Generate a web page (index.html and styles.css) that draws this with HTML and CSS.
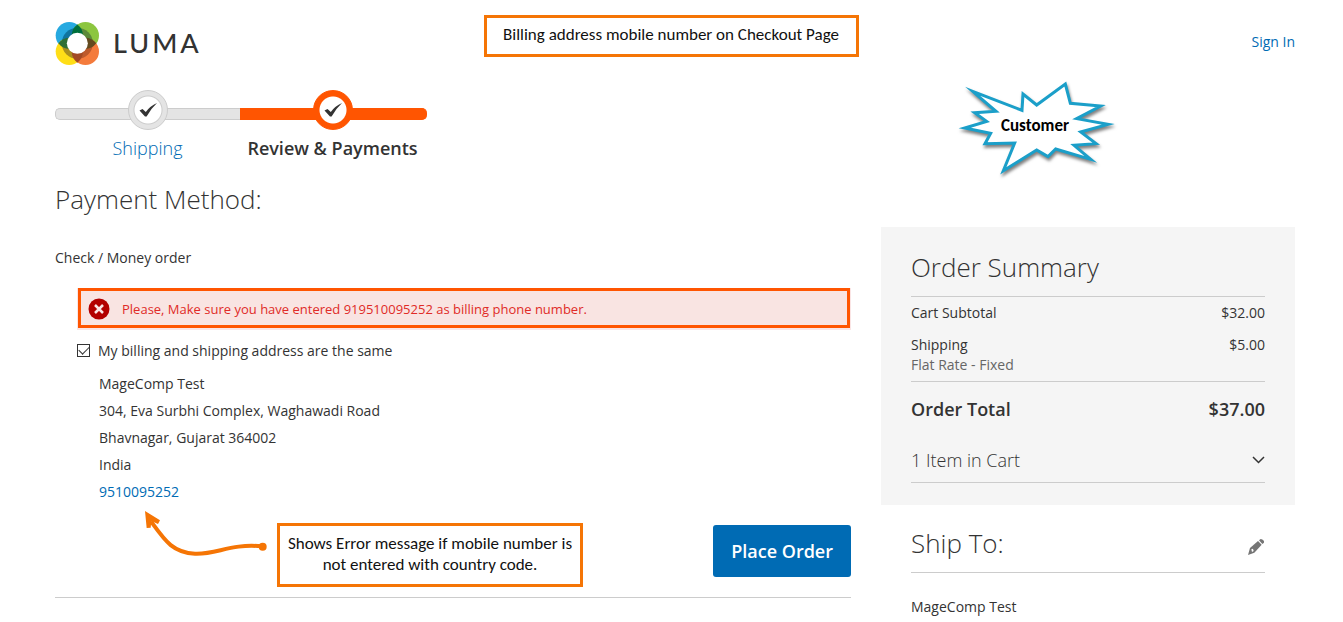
FILE: index.html
```html
<!DOCTYPE html>
<html lang="en">
<head>
  <meta charset="UTF-8" />
  <meta name="viewport" content="width=device-width, initial-scale=1" />
  <title>Checkout</title>
  <link rel="stylesheet" href="styles.css">
</head>
<body>
  <div class="page">
    <header class="header">
      <a href="#" class="logo" aria-label="Luma">
        <svg viewBox="46 34 130 130" width="44" height="44" aria-hidden="true">
          <circle cx="88" cy="77" r="40" fill="#26a9e0" />
          <circle cx="136" cy="77" r="40" fill="#8cc63f" />
          <circle cx="88" cy="124" r="40" fill="#ffde17" />
          <circle cx="136" cy="124" r="40" fill="#f47b3c" />
          <path d="M112 54A46 46 0 0 0 66 100L112 100Z" fill="#0f749f" />
          <path d="M112 54A46 46 0 0 1 158 100L112 100Z" fill="#5c8a3a" />
          <path d="M66 100A46 46 0 0 0 112 146L112 100Z" fill="#a98f1f" />
          <path d="M158 100A46 46 0 0 1 112 146L112 100Z" fill="#bd5a2c" />
          <path d="M112 44A41 41 0 0 1 112 110A41 41 0 0 1 112 44Z" fill="#006f3c" />
          <path d="M112 91A41 41 0 0 1 112 157A41 41 0 0 1 112 91Z" fill="#a34a24" />
          <path d="M56 100A41 41 0 0 1 122 100A41 41 0 0 1 56 100Z" fill="#2f6f35" />
          <path d="M102 100A41 41 0 0 1 168 100A41 41 0 0 1 102 100Z" fill="#634a1e" />
          <circle cx="112" cy="100" r="31" fill="#fff" />
        </svg>
        <span class="logo-text">LUMA</span>
      </a>
      <a href="#" class="sign-in">Sign In</a>
    </header>

    <p class="note note-title">Billing address mobile number on Checkout Page</p>

    <div class="burst">
      <svg viewBox="0 0 570 345" aria-hidden="true">
        <polygon points="98,64 246,121 249,72 290,105 376,42 391,100 482,108 410,146 504,163 422,186 468,221 402,226 452,268 347,237 324,260 290,240 190,302 224,219 135,221 152,190 74,174 140,154 104,128 168,124" />
      </svg>
      <span>Customer</span>
    </div>

    <!-- Checkout steps -->
    <ol class="steps">
      <li class="step">
        <div class="track"><span class="marker">
          <svg viewBox="0 0 20 16" width="20" height="16" aria-hidden="true"><path d="M1.500 8.500L4.500 7L7.800 10Q12 4 19 1Q13 6.500 8.600 14.500L7 14.500Z" /></svg>
        </span></div>
        <a href="#">Shipping</a>
      </li>
      <li class="step active">
        <div class="track"><span class="marker">
          <svg viewBox="0 0 20 16" width="20" height="16" aria-hidden="true"><path d="M1.500 8.500L4.500 7L7.800 10Q12 4 19 1Q13 6.500 8.600 14.500L7 14.500Z" /></svg>
        </span></div>
        <span>Review &amp; Payments</span>
      </li>
    </ol>

    <div class="columns">
      <main class="payment">
        <h1>Payment Method:</h1>
        <h2>Check / Money order</h2>

        <div class="payment-content">
          <div class="error">
            <div class="error-inner" role="alert">
              <svg viewBox="0 0 22 22" width="22" height="22" aria-hidden="true">
                <circle cx="11" cy="11" r="10.500" fill="#b30000" />
                <path d="M7 7L15 15M15 7L7 15" stroke="#fae5e5" stroke-width="2.500" />
              </svg>
              <span>Please, Make sure you have entered 919510095252 as billing phone number.</span>
            </div>
          </div>

          <div class="same-address">
            <input type="checkbox" id="same" checked />
            <label for="same">My billing and shipping address are the same</label>
          </div>

          <address>
            MageComp Test<br />
            304, Eva Surbhi Complex, Waghawadi Road<br />
            Bhavnagar, Gujarat 364002<br />
            India<br />
            <a href="tel:9510095252">9510095252</a>
          </address>

          <div class="actions">
            <svg class="arrow" viewBox="0 0 390 150" width="130" height="50" aria-hidden="true">
              <path d="M33 34C75 92 98 128 165 131C230 134 270 100 367 109" fill="none" stroke="#f57505" stroke-width="12" />
              <path d="M15 3L60 31L54 42L34 33L32 53L20 54Z" fill="#f57505" />
              <circle cx="368" cy="110" r="12" fill="#f57505" />
            </svg>
            <p class="note note-error">Shows Error message if mobile number is<br />not entered with country code.</p>
            <button type="button">Place Order</button>
          </div>
        </div>
      </main>

      <aside class="sidebar">
        <section class="summary">
          <h2 class="block-title">Order Summary</h2>
          <table>
            <tbody>
              <tr>
                <th scope="row">Cart Subtotal</th>
                <td>$32.00</td>
              </tr>
              <tr>
                <th scope="row">Shipping<span class="method">Flat Rate - Fixed</span></th>
                <td>$5.00</td>
              </tr>
            </tbody>
            <tfoot>
              <tr>
                <th scope="row">Order Total</th>
                <td>$37.00</td>
              </tr>
            </tfoot>
          </table>
          <button type="button" class="cart-toggle" aria-expanded="false">
            <span>1 Item in Cart</span>
            <svg viewBox="0 0 14 10" width="14" height="10" aria-hidden="true"><path d="M2 2L7.500 7.500L13 2" /></svg>
          </button>
        </section>

        <section class="ship-to">
          <div class="block-title">
            <h2>Ship To:</h2>
            <button type="button" class="edit" aria-label="Edit">
              <svg viewBox="0 0 48 48" width="16" height="16" aria-hidden="true">
                <path d="M0 48L6 27L30 6L41 17L19 41Z" fill="#757575" />
                <path d="M33 4L38 0Q43 0 48 6Q49 10 47 12L43 15Z" fill="#757575" />
                <path d="M10 31L15 29L17 36L12 39Z" fill="#fff" />
              </svg>
            </button>
          </div>
          <p>MageComp Test</p>
        </section>
      </aside>
    </div>
  </div>
</body>
</html>
```
FILE: styles.css
```css
* {
  box-sizing: border-box;
}

body {
  margin: 0;
  font-family: 'Open Sans', 'Noto Sans', sans-serif;
  font-size: 14px;
  line-height: 20px;
  color: #333;
  background-color: #fff;
}

h1, h2, p, ol {
  margin: 0;
  padding: 0;
}

a {
  color: #006bb4;
  text-decoration: none;
}

button {
  border: none;
  background: none;
  padding: 0;
  font-family: inherit;
  color: inherit;
  cursor: pointer;
}

svg {
  display: block;
}

.page {
  position: relative;
  padding: 0 48px 0 55px;
}

.header {
  display: flex;
  align-items: center;
  justify-content: space-between;
  height: 90px;
  padding-bottom: 6px;
}

.logo {
  display: flex;
  align-items: center;
  gap: 14px;
  padding-top: 2px;
  color: #333;
}

.logo-text {
  font-family: Lato, sans-serif;
  font-size: 27px;
  font-weight: 500;
  letter-spacing: 3px;
}

/* Orange notes laid over the page */
.note {
  position: absolute;
  border: 3px solid #f57505;
  background-color: #fff;
  color: #111;
  font-family: Carlito, Lato, sans-serif;
  font-size: 17px;
  line-height: 21px;
  text-align: center;
  white-space: nowrap;
}

.note-title {
  top: 15px;
  left: 50%;
  width: 375px;
  margin-left: -188px;
  padding: 6px 0 9px;
}

.burst {
  position: absolute;
  top: 70px;
  right: 213px;
  width: 190px;
}

.burst polygon {
  fill: #fff;
  stroke: #1b9fc9;
  stroke-width: 9;
  stroke-miterlimit: 10;
  filter: drop-shadow(3px 8px 5px rgba(0, 0, 0, 0.5));
}

.burst span {
  position: absolute;
  top: 46px;
  left: 0;
  width: 100%;
  text-align: center;
  font-family: Carlito, Lato, sans-serif;
  font-size: 17px;
  font-weight: 700;
  color: #000;
}

/* Steps */
.steps {
  display: flex;
  list-style: none;
}

.step {
  width: 185px;
  font-size: 18px;
  font-weight: 300;
  text-align: center;
}

.track {
  display: flex;
  align-items: center;
  justify-content: center;
  height: 40px;
  margin-bottom: 8px;
  position: relative;
}

.track::before {
  content: "";
  position: absolute;
  top: 18px;
  left: 0;
  right: 0;
  height: 10px;
  background-color: #e4e4e4;
  border: 1px solid #ccc;
  border-right: none;
  border-radius: 5px 0 0 5px;
}

.marker {
  position: relative;
  display: flex;
  align-items: center;
  justify-content: center;
  width: 40px;
  height: 40px;
  border-radius: 50%;
  background: radial-gradient(circle, #fff 13px, #ccc 14px, #e4e4e4 15px);
  border: 1px solid #ccc;
}

.marker path {
  fill: #333;
}

.step.active {
  font-weight: 600;
}

.step.active .track::before {
  right: -2px;
  background-color: #ff5501;
  border-color: #ff5501;
  border-radius: 0 5px 5px 0;
}

.step.active .marker {
  background: radial-gradient(circle, #fff 13px, #ff5501 14px);
  border-color: #ff5501;
}

/* Content */
.columns {
  display: grid;
  grid-template-columns: 1fr 414px;
  gap: 30px;
  align-items: start;
}

.payment {
  padding: 23px 0 20px;
  border-bottom: 1px solid #ccc;
}

.payment h1 {
  font-size: 26px;
  font-weight: 300;
  line-height: 36px;
}

.payment h2 {
  margin: 31px 0 20px;
  font-size: 14px;
  font-weight: 400;
}

.payment-content {
  padding-left: 22px;
}

.error {
  padding: 0 1px 2px;
  background-color: #fae5e5;
}

.error-inner {
  display: flex;
  align-items: center;
  gap: 12px;
  min-height: 40px;
  padding: 2px 7px 0;
  border: 3px solid #ff5501;
  background-color: #f9e4e2;
  color: #e02b27;
  font-size: 13px;
}

.same-address {
  display: flex;
  align-items: center;
  gap: 8px;
  margin-top: 11px;
}

.same-address input {
  appearance: none;
  width: 13px;
  height: 13px;
  margin: 0 0 2px;
  border: 1px solid #333;
  background-color: #fff;
  position: relative;
}

.same-address input:checked::after {
  content: "";
  position: absolute;
  top: 1px;
  left: 1px;
  width: 9px;
  height: 5px;
  border-left: 1px solid #333;
  border-bottom: 1px solid #333;
  transform: rotate(-45deg);
}

address {
  margin-top: 9px;
  padding-left: 22px;
  font-style: normal;
  line-height: 27px;
}

.actions {
  position: relative;
  display: flex;
  justify-content: flex-end;
  margin-top: 20px;
}

.actions button {
  height: 52px;
  padding: 0 18px;
  border-radius: 3px;
  background-color: #006bb4;
  color: #fff;
  font-size: 18px;
  font-weight: 600;
}

.actions button:hover {
  background-color: #005b99;
}

.note-error {
  top: -2px;
  left: 200px;
  width: 306px;
  padding: 7px 0 9px;
}

.arrow {
  position: absolute;
  top: -15px;
  left: 63px;
}

/* Sidebar */
.sidebar {
  padding-top: 69px;
}

.summary {
  padding: 22px 30px;
  background-color: #f5f5f5;
}

.block-title {
  display: flex;
  align-items: center;
  justify-content: space-between;
  padding-bottom: 11px;
  border-bottom: 1px solid #ccc;
}

.block-title,
.block-title h2 {
  font-size: 26px;
  font-weight: 300;
  line-height: 36px;
}

.edit {
  padding: 8px 1px 0 0;
}

table {
  width: 100%;
  border-collapse: separate;
  border-spacing: 0;
}

th, td {
  padding: 6px 0;
  font-weight: 400;
  text-align: left;
  vertical-align: top;
}

td {
  text-align: right;
}

.method {
  display: block;
  color: #666;
}

tfoot th, tfoot td {
  padding: 17px 0;
  border-top: 1px solid #ccc;
  font-size: 18px;
  font-weight: 600;
}

.cart-toggle {
  display: flex;
  align-items: center;
  justify-content: space-between;
  width: 100%;
  padding: 14px 0 12px;
  border-bottom: 1px solid #ccc;
  font-size: 18px;
  font-weight: 300;
  line-height: 20px;
}

.cart-toggle path {
  fill: none;
  stroke: #333;
  stroke-width: 1.5;
}

.ship-to {
  padding: 20px 30px 0;
}

.ship-to p {
  padding-top: 24px;
}
```
